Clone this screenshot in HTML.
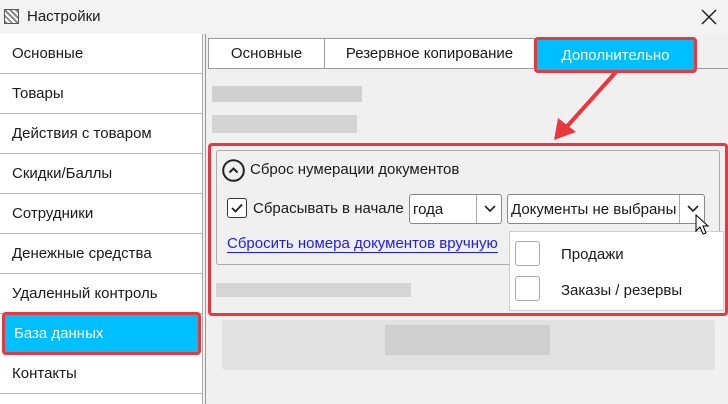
<!DOCTYPE html>
<html><head><meta charset="utf-8"><style>
*{box-sizing:border-box;margin:0;padding:0}
body{width:728px;height:404px;overflow:hidden;background:#f0f0f0;font-family:"Liberation Sans","DejaVu Sans",sans-serif;font-size:15px;color:#1a1a1a;position:relative}
.abs{position:absolute}
.side{left:0;top:34px;width:203px;height:370px;background:#fff;border-right:1px solid #aaa}
.item{position:absolute;left:0;width:202px;height:40px;border-bottom:1px solid #bbb;padding:11px 0 0 12px}
.blur{position:absolute;background:#d8d8d8}
</style></head><body>
<div class="abs" style="left:0;top:0;width:728px;height:34px;background:#f3f3f3"></div>
<div class="abs" style="left:4px;top:9px;width:15px;height:15px;border:1px solid #555;background:repeating-linear-gradient(45deg,#888 0 2px,#fff 2px 4px)"></div>
<div class="abs" style="left:27px;top:8px;font-size:15px">Настройки</div>
<svg class="abs" style="left:701px;top:9px" width="16" height="16"><path d="M1 1L15 15M15 1L1 15" stroke="#222" stroke-width="1.5"/></svg>
<div class="abs side">
<div class="item" style="top:0">Основные</div>
<div class="item" style="top:40px">Товары</div>
<div class="item" style="top:80px">Действия с товаром</div>
<div class="item" style="top:120px">Скидки/Баллы</div>
<div class="item" style="top:160px">Сотрудники</div>
<div class="item" style="top:200px">Денежные средства</div>
<div class="item" style="top:240px">Удаленный контроль</div>
<div class="item" style="top:320px">Контакты</div>
</div>
<div class="abs" style="left:2px;top:312px;width:199px;height:43px;border:3px solid #e8373d;border-radius:4px;background:#00bfff;color:#fff;padding:10px 0 0 9px">База данных</div>
<div class="abs" style="left:205px;top:34px;width:1px;height:370px;background:#999"></div>
<div class="abs" style="left:208px;top:68px;width:520px;height:1px;background:#999"></div>
<div class="abs" style="left:208px;top:38px;width:117px;height:31px;border:1px solid #999;background:#fff;text-align:center;padding-top:6px">Основные</div>
<div class="abs" style="left:324px;top:38px;width:211px;height:31px;border:1px solid #999;background:#fff;text-align:center;padding-top:6px">Резервное копирование</div>
<div class="abs" style="left:534px;top:37px;width:163px;height:36px;border:3px solid #e8373d;border-radius:4px;background:#00bfff;color:#fff;text-align:center;padding-top:7px">Дополнительно</div>
<div class="blur" style="left:212px;top:86px;width:150px;height:16px;background:#d0d0d0"></div>
<div class="blur" style="left:212px;top:115px;width:145px;height:18px;background:#d3d3d3"></div>
<svg class="abs" style="left:540px;top:68px" width="90" height="80"><line x1="76" y1="4" x2="22" y2="64" stroke="#e8373d" stroke-width="4"/><polygon points="14,72 18,50 36,64" fill="#e8373d"/></svg>
<div class="abs" style="left:208px;top:143px;width:520px;height:173px;border:3px solid #e8373d;border-radius:4px"></div>
<div class="abs" style="left:216px;top:150px;width:504px;height:115px;border:1px solid #aaa;border-radius:3px"></div>
<svg class="abs" style="left:222px;top:159px" width="23" height="23"><circle cx="11.5" cy="11.5" r="10.3" fill="none" stroke="#222" stroke-width="2"/><path d="M7.5 13.5L11.5 9.5L15.5 13.5" fill="none" stroke="#222" stroke-width="2"/></svg>
<div class="abs" style="left:250px;top:161px">Сброс нумерации документов</div>
<div class="abs" style="left:227px;top:198px;width:20px;height:20px;border:1px solid #333;border-radius:3px;background:#fff"><svg width="18" height="18"><path d="M4 9L7.5 12.5L14 5.5" fill="none" stroke="#222" stroke-width="1.8"/></svg></div>
<div class="abs" style="left:253px;top:200px">Сбрасывать в начале</div>
<div class="abs" style="left:409px;top:194px;width:93px;height:30px;border:1px solid #888;border-radius:3px;background:#fff;padding:6px 0 0 3px">года<div class="abs" style="left:66px;top:0;width:1px;height:28px;background:#aaa"></div><svg class="abs" style="left:73px;top:9px" width="14" height="10"><path d="M2 2L7 7L12 2" fill="none" stroke="#222" stroke-width="1.6"/></svg></div>
<div class="abs" style="left:507px;top:194px;width:198px;height:30px;border:1px solid #888;border-radius:3px;background:#fff;padding:6px 0 0 3px">Документы не выбраны<div class="abs" style="left:171px;top:0;width:1px;height:28px;background:#aaa"></div><svg class="abs" style="left:178px;top:9px" width="14" height="10"><path d="M2 2L7 7L12 2" fill="none" stroke="#222" stroke-width="1.6"/></svg></div>
<div class="abs" style="left:227px;top:235px;color:#1a1aff;border-bottom:1px solid #1a1aff;line-height:17px">Сбросить номера документов вручную</div>
<div class="abs" style="left:216px;top:283px;width:195px;height:14px;background:#d5d5d5"></div>
<div class="abs" style="left:509px;top:231px;width:215px;height:80px;background:#fff;border:1px solid #ccc"></div>
<div class="abs" style="left:515px;top:241px;width:25px;height:25px;border:1px solid #aaa;border-radius:3px;background:#fff"></div>
<div class="abs" style="left:561px;top:246px">Продажи</div>
<div class="abs" style="left:515px;top:276px;width:25px;height:25px;border:1px solid #aaa;border-radius:3px;background:#fff"></div>
<div class="abs" style="left:561px;top:282px">Заказы / резервы</div>
<div class="abs" style="left:222px;top:320px;width:493px;height:50px;background:#e2e2e2;border-radius:3px"></div>
<div class="abs" style="left:385px;top:325px;width:165px;height:30px;background:#cfcfcf"></div>
<svg class="abs" style="left:694px;top:214px" width="16" height="22"><path d="M2 1 L2 17 L6 13 L9 20 L12 19 L9 12 L14 12 Z" fill="#fff" stroke="#000"/></svg>
</body></html>
